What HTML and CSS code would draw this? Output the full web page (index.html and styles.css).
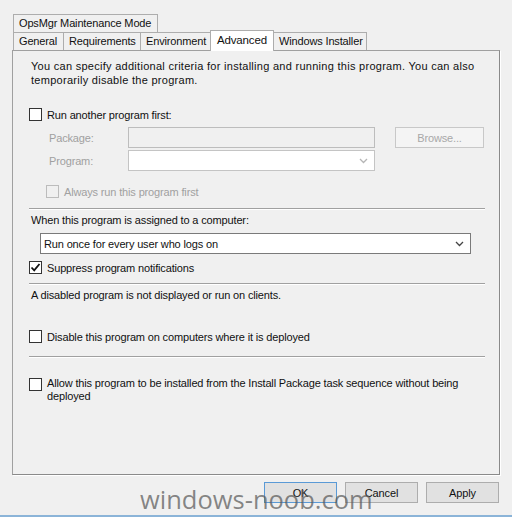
FILE: index.html
```html
<!DOCTYPE html>
<html lang="en">
<head>
  <meta charset="UTF-8" />
  <title>Program Properties</title>
  <link rel="stylesheet" href="styles.css">
</head>
<body>

  <div class="dialog">

    <!-- sekmeler -->
    <div class="tab-row back">
      <div class="tab wide">OpsMgr Maintenance Mode</div>
    </div>
    <div class="tab-row front">
      <div class="tab t-general">General</div>
      <div class="tab t-req">Requirements</div>
      <div class="tab t-env">Environment</div>
      <div class="tab t-adv active">Advanced</div>
      <div class="tab t-win">Windows Installer</div>
    </div>

    <div class="panel">
      <p class="intro">You can specify additional criteria for installing and running this program. You can also temporarily disable the program.</p>

      <label class="check first-run">
        <span class="box"></span>
        <span>Run another program first:</span>
      </label>

      <div class="field-row package-row">
        <span class="field-label">Package:</span>
        <div class="input disabled"></div>
        <button class="btn browse" disabled>Browse...</button>
      </div>

      <div class="field-row">
        <span class="field-label">Program:</span>
        <div class="input select-off">
          <svg width="9" height="6" viewBox="0 0 9 6"><path d="M1 1 L4.5 4.5 L8 1" fill="none" stroke="#b5b5b5" stroke-width="1.3"/></svg>
        </div>
      </div>

      <label class="check always off">
        <span class="box"></span>
        <span>Always run this program first</span>
      </label>

      <div class="sep"></div>

      <p class="caption">When this program is assigned to a computer:</p>
      <div class="select main">
        <span>Run once for every user who logs on</span>
        <svg width="9" height="6" viewBox="0 0 9 6"><path d="M1 1 L4.5 4.5 L8 1" fill="none" stroke="#444" stroke-width="1.3"/></svg>
      </div>

      <label class="check suppress">
        <span class="box checked">
          <svg width="11" height="11" viewBox="0 0 11 11"><path d="M1.5 5.5 L4.2 8.3 L9.5 2" fill="none" stroke="#111" stroke-width="1.8"/></svg>
        </span>
        <span>Suppress program notifications</span>
      </label>

      <div class="sep sep2"></div>

      <p class="caption">A disabled program is not displayed or run on clients.</p>

      <label class="check disable">
        <span class="box"></span>
        <span>Disable this program on computers where it is deployed</span>
      </label>

      <div class="sep sep3"></div>

      <label class="check allow">
        <span class="box"></span>
        <span>Allow this program to be installed from the Install Package task sequence without being deployed</span>
      </label>
    </div>

    <div class="buttons">
      <button class="btn focus">OK</button>
      <button class="btn">Cancel</button>
      <button class="btn">Apply</button>
    </div>
  </div>

  <div class="watermark">windows-noob.com</div>
  <div class="bottom-line"></div>

</body>
</html>
```

FILE: styles.css
```css
* {
  box-sizing: border-box;
}

body {
  margin: 0;
  width: 512px;
  height: 517px;
  background: #f0f0f0;
  font-family: 'Liberation Sans', Arial, sans-serif;
  font-size: 11px;
  letter-spacing: -0.15px;
  color: #111;
  position: relative;
  overflow: hidden;
}

.dialog {
  padding: 14px 0 0 12px;
}

/* sekmeler */
.tab-row {
  display: flex;
  padding-left: 1px;
  height: 18px;
}

.tab {
  height: 18px;
  line-height: 17px;
  border: 1px solid #adadad;
  border-bottom: none;
  background: #f0f0f0;
  padding: 0 5px;
  white-space: nowrap;
  margin-right: -1px;
}

.tab.wide { width: 145px; }
.t-general { width: 51px; }
.t-req { width: 78px; }
.t-env { width: 71px; }
.t-adv { width: 64px; }
.t-win { width: 94px; }

.tab-row.front {
  position: relative;
  z-index: 2;
}

.tab.active {
  background: #fff;
  height: 21px;
  margin-top: -2px;
  line-height: 19px;
  padding-left: 6px;
  font-size: 11.5px;
}

.panel {
  width: 488px;
  height: 425px;
  border: 1px solid #a0a0a0;
  border-right-color: #8a8a8a;
  border-bottom-color: #8a8a8a;
  box-shadow: 1px 1px 0 #fff;
  background: #f0f0f0;
  padding: 0 14px 0 16px;
  position: relative;
  z-index: 1;
}

.intro {
  margin: 8px 0 0 2px;
  line-height: 14px;
  padding-right: 4px;
  letter-spacing: 0.28px;
}

/* onay kutuları */
.check {
  display: flex;
  align-items: flex-start;
  gap: 5px;
  line-height: 14px;
}

.box {
  width: 13px;
  height: 13px;
  flex: none;
  border: 1px solid #333;
  background: #fff;
  display: flex;
  align-items: center;
  justify-content: center;
}

.check.off {
  color: #a0a0a0;
}

.check.off .box {
  border-color: #bcbcbc;
  background: #f0f0f0;
}

.first-run { margin-top: 21px; }

.always {
  margin: 14px 0 0 17px;
}

.suppress { margin-top: 7px; }
.disable { margin-top: 28px; }
.allow { margin-top: 19px; line-height: 13px; }
.allow .box { margin-top: 1px; }

/* alanlar */
.field-row {
  display: flex;
  align-items: center;
  height: 21px;
  margin-top: 2px;
  padding-left: 20px;
}

.package-row { margin-top: 5px; }

.field-label {
  width: 79px;
  color: #a0a0a0;
}

.input {
  width: 247px;
  height: 21px;
  border: 1px solid #c4c4c4;
  background: #fff;
}

.input.disabled {
  background: #f0f0f0;
  border-color: #bdbdbd;
}

.select-off {
  display: flex;
  justify-content: flex-end;
  align-items: center;
  padding-right: 6px;
}

.btn {
  font: inherit;
  letter-spacing: inherit;
  width: 73px;
  height: 21px;
  border: 1px solid #adadad;
  background: #e1e1e1;
  color: #111;
  padding: 0;
}

.btn.browse {
  width: 89px;
  margin-left: 20px;
  background: #f4f4f4;
  border-color: #c8c8c8;
  color: #a8a8a8;
}

.btn.focus {
  border-color: #5a9ad6;
}

.sep {
  height: 2px;
  border-top: 1px solid #a0a0a0;
  border-bottom: 1px solid #fff;
  margin-top: 9px;
  width: 456px;
}

.sep2 { margin-top: 8px; }
.sep3 { margin-top: 12px; }

.caption {
  margin: 3px 0 0 2px;
  line-height: 14px;
}

.select.main {
  margin: 6px 0 0 11px;
  width: 431px;
  height: 21px;
  border: 1px solid #7a7a7a;
  background: #fff;
  display: flex;
  align-items: center;
  justify-content: space-between;
  padding: 0 6px 0 3px;
}

.buttons {
  display: flex;
  justify-content: flex-end;
  gap: 8px;
  width: 487px;
  margin-top: 7px;
}

.watermark {
  position: absolute;
  left: 140px;
  top: 482px;
  font-family: 'Open Sans', sans-serif;
  font-size: 25.5px;
  letter-spacing: 0;
  color: rgba(90, 90, 90, 0.72);
  z-index: 5;
  white-space: nowrap;
}

.bottom-line {
  position: absolute;
  left: 0;
  right: 0;
  bottom: 0;
  height: 2px;
  background: #8bb4d8;
}
```
